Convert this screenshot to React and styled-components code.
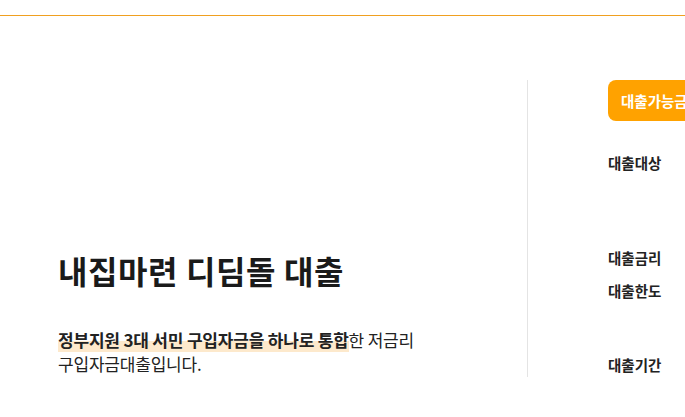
import React from "react";
import styled, { createGlobalStyle } from "styled-components";

const GlobalStyle = createGlobalStyle`
  body {
    margin: 0;
    background: #fff;
    overflow: hidden;
    font-family: "Noto Sans CJK KR", "Noto Sans", sans-serif;
    color: #1a1a1a;
  }
`;

const Page = styled.div`
  width: 900px;
`;

const TopBar = styled.header`
  height: 15px;
  border-bottom: 1px solid #f0a020;
`;

const Main = styled.section`
  display: flex;
  margin-top: 64px;
  height: 297px;
`;

const Intro = styled.div`
  width: 469px;
  padding-left: 58px;
  display: flex;
  flex-direction: column;
  justify-content: flex-end;
  padding-bottom: 1px;
`;

const Title = styled.h1`
  margin: 0 0 38px;
  font-size: 32px;
  line-height: 40px;
  font-weight: 700;
  letter-spacing: 0.6px;
  color: #1a1a1a;
`;

const Desc = styled.p`
  margin: 0;
  font-size: 17px;
  line-height: 24px;
  letter-spacing: -0.2px;
  word-break: keep-all;
  color: #222;
  width: 380px;
`;

const Mark = styled.strong`
  font-weight: 700;
  background: linear-gradient(transparent 55%, #fde9cc 55%);
`;

const Detail = styled.div`
  border-left: 1px solid #e4e4e4;
  padding-left: 80px;
  flex: 1;
`;

const Badge = styled.div`
  display: inline-flex;
  align-items: center;
  height: 41px;
  width: 160px;
  padding-left: 13px;
  border-radius: 8px;
  background: #ffa200;
  color: #fff;
  font-size: 14.5px;
  font-weight: 700;
  box-sizing: border-box;
`;

const InfoList = styled.dl`
  margin: 32px 0 0;
  display: flex;
  flex-direction: column;
  gap: 13px;
`;

const InfoRow = styled.div`
  height: ${(p) => p.$h}px;
`;

const Label = styled.dt`
  font-size: 14.5px;
  line-height: 20px;
  font-weight: 700;
  color: #222;
`;

const rows = [
  { label: "대출대상", h: 82 },
  { label: "대출금리", h: 20 },
  { label: "대출한도", h: 61 },
  { label: "대출기간", h: 20 },
];

export default function App() {
  return (
    <Page>
      <GlobalStyle />
      <TopBar />
      <Main>
        <Intro>
          <Title>내집마련 디딤돌 대출</Title>
          <Desc>
            <Mark>정부지원 3대 서민 구입자금을 하나로 통합</Mark>한 저금리
            구입자금대출입니다.
          </Desc>
        </Intro>
        <Detail>
          <Badge>대출가능금액</Badge>
          <InfoList>
            {rows.map((r) => (
              <InfoRow key={r.label} $h={r.h}>
                <Label>{r.label}</Label>
              </InfoRow>
            ))}
          </InfoList>
        </Detail>
      </Main>
    </Page>
  );
}
